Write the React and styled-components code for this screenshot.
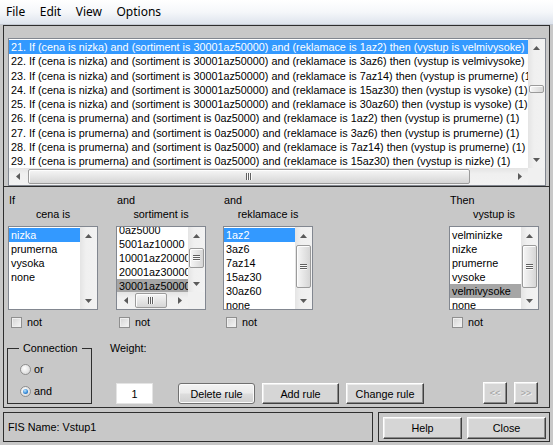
import styled, { createGlobalStyle } from "styled-components";

const PANEL = "#c8c8c8";
const EDGE = "#2e2e2e";

const GlobalStyle = createGlobalStyle`
  * { box-sizing: border-box; }
  html, body {
    margin: 0;
    padding: 0;
    background: ${PANEL};
  }
  body {
    font-family: "Liberation Sans", Arial, sans-serif;
    font-size: 10.8px;
    color: #000;
  }
`;

const Window = styled.div`
  width: 553px;
  height: 445px;
  overflow: hidden;
  background: ${PANEL};
  display: flex;
  flex-direction: column;
`;

const MenuBar = styled.div`
  height: 25px;
  flex: 0 0 25px;
  display: flex;
  align-items: center;
  gap: 14.5px;
  padding: 0 0 2px 6px;
  background: linear-gradient(#ffffff, #f5f7fa 50%, #dee4ed);
  border-bottom: 1px solid #c5cad3;
  font-family: "Noto Sans", "Open Sans", sans-serif;
  font-size: 12px;
`;

const MenuItem = styled.span`
  white-space: nowrap;
`;

const Body = styled.div`
  display: flex;
  flex-direction: column;
  padding: 0 3px;
`;

const Frame = styled.div`
  border: 1px solid ${EDGE};
`;

const RulesFrame = styled(Frame)`
  height: 162px;
  padding: 12px 3px 0 4px;
`;

const EditFrame = styled(Frame)`
  height: 221px;
  border-top: 0;
  padding: 6px 0 3px 3px;
  display: flex;
  flex-direction: column;
`;

/* ---------- list boxes ---------- */

const ListBox = styled.div`
  width: ${(p) => p.$w}px;
  height: ${(p) => p.$h}px;
  margin-top: ${(p) => p.$mt || 0}px;
  border: 1px solid #828790;
  background: #fff;
  display: grid;
  grid-template-columns: minmax(0, 1fr) 17px;
  grid-template-rows: ${(p) => (p.$hscroll ? "minmax(0, 1fr) 17px" : "minmax(0, 1fr)")};
  overflow: hidden;
`;

const Rows = styled.div`
  overflow: hidden;
`;

const RowStack = styled.div`
  margin-top: ${(p) => p.$offset}px;
`;

const Row = styled.div`
  height: ${(p) => p.$h}px;
  line-height: ${(p) => p.$h}px;
  padding-left: 2px;
  white-space: nowrap;
  overflow: hidden;
  background: ${(p) =>
    p.$sel === "active" ? "#3399ff" : p.$sel === "inactive" ? "#a6a6a6" : "transparent"};
  color: ${(p) => (p.$sel === "active" ? "#fff" : "#000")};
`;

const VBar = styled.div`
  display: flex;
  flex-direction: column;
  background: linear-gradient(90deg, #e4e4e4, #f0f0f0 35%, #f2f2f2);
`;

const HBar = styled.div`
  display: flex;
  background: linear-gradient(#e4e4e4, #f0f0f0 35%, #f2f2f2);
`;

const Corner = styled.div`
  background: #f0f0f0;
`;

const ArrowBox = styled.div`
  flex: 0 0 17px;
  width: 17px;
  height: 17px;
  display: flex;
  align-items: center;
  justify-content: center;
`;

const Lane = styled.div`
  flex: 1;
  display: flex;
  flex-direction: ${(p) => (p.$vertical ? "column" : "row")};
`;

const VThumb = styled.div`
  margin: ${(p) => p.$start}px 1px 0 1px;
  height: ${(p) => p.$size}px;
  border: 1px solid #9b9b9b;
  border-radius: 2px;
  background: linear-gradient(90deg, #f6f6f6, #e6e6e6 50%, #d6d6d6);
  box-shadow: inset 1px 1px 0 #fdfdfd;
  display: flex;
  align-items: center;
  justify-content: center;
`;

const HThumb = styled.div`
  margin: 1px 0 1px ${(p) => p.$start}px;
  width: ${(p) => p.$size}px;
  border: 1px solid #9b9b9b;
  border-radius: 2px;
  background: linear-gradient(#f6f6f6, #e6e6e6 50%, #d6d6d6);
  box-shadow: inset 1px 1px 0 #fdfdfd;
  display: flex;
  align-items: center;
  justify-content: center;
`;

function Tri({ dir }) {
  const flat = dir === "up" || dir === "down";
  const w = flat ? 7 : 4;
  const h = flat ? 4 : 7;
  const pts = {
    up: "0,4 3.5,0 7,4",
    down: "0,0 7,0 3.5,4",
    left: "4,0 4,7 0,3.5",
    right: "0,0 0,7 4,3.5",
  }[dir];
  return (
    <svg width={w} height={h} viewBox={`0 0 ${w} ${h}`}>
      <polygon points={pts} fill="#5a5a5a" />
    </svg>
  );
}

function Grip({ vertical }) {
  return vertical ? (
    <svg width="7" height="6" viewBox="0 0 7 6">
      <path d="M0 0.5H7M0 2.5H7M0 4.5H7" stroke="#606060" strokeWidth="1" />
      <path d="M0 1.5H7M0 3.5H7M0 5.5H7" stroke="#fafafa" strokeWidth="1" />
    </svg>
  ) : (
    <svg width="6" height="7" viewBox="0 0 6 7">
      <path d="M0.5 0V7M2.5 0V7M4.5 0V7" stroke="#606060" strokeWidth="1" />
      <path d="M1.5 0V7M3.5 0V7M5.5 0V7" stroke="#fafafa" strokeWidth="1" />
    </svg>
  );
}

function VScroll({ start, size, grip }) {
  return (
    <VBar>
      <ArrowBox>
        <Tri dir="up" />
      </ArrowBox>
      <Lane $vertical>
        {size ? (
          <VThumb $start={start} $size={size}>
            {grip && <Grip vertical />}
          </VThumb>
        ) : null}
      </Lane>
      <ArrowBox>
        <Tri dir="down" />
      </ArrowBox>
    </VBar>
  );
}

function HScroll({ start, size }) {
  return (
    <HBar>
      <ArrowBox>
        <Tri dir="left" />
      </ArrowBox>
      <Lane>
        <HThumb $start={start} $size={size}>
          <Grip />
        </HThumb>
      </Lane>
      <ArrowBox>
        <Tri dir="right" />
      </ArrowBox>
    </HBar>
  );
}

function List({ w, h, mt, items, selected, selKind, rowH, offset, vthumb, hthumb }) {
  return (
    <ListBox $w={w} $h={h} $mt={mt} $hscroll={!!hthumb}>
      <Rows>
        <RowStack $offset={offset}>
          {items.map((it, i) => (
            <Row key={i} $h={rowH} $sel={i === selected ? selKind : null}>
              {it}
            </Row>
          ))}
        </RowStack>
      </Rows>
      <VScroll {...vthumb} />
      {hthumb && <HScroll {...hthumb} />}
      {hthumb && <Corner />}
    </ListBox>
  );
}

/* ---------- rule editing area ---------- */

const Columns = styled.div`
  display: flex;
  padding-left: 1px;
`;

const Column = styled.div`
  width: 90px;
  margin-left: ${(p) => p.$gap}px;
  display: flex;
  flex-direction: column;
`;

const Caption = styled.div`
  height: 14px;
  line-height: 14px;
  padding-left: 1px;
  white-space: nowrap;
`;

const SubCaption = styled(Caption)`
  padding-left: 0;
  text-align: center;
`;

const NotRow = styled.label`
  margin-top: 7px;
  height: 11px;
  display: flex;
  align-items: center;
  gap: 5px;
  padding-left: 3px;
  line-height: 11px;
`;

const CheckBox = styled.span`
  width: 11px;
  height: 11px;
  border: 1px solid #8f8f8f;
  background: linear-gradient(135deg, #d4d4d4, #f6f6f6);
  box-shadow: inset 0 0 0 1px #efefef;
`;

const BottomRow = styled.div`
  margin-top: 13px;
  height: 63px;
  display: flex;
  align-items: flex-end;
`;

const Group = styled.fieldset`
  margin: 0;
  width: 85px;
  height: 63px;
  min-width: 0;
  padding: 7px 0 0 11px;
  border: 1px solid ${EDGE};
  display: flex;
  flex-direction: column;
  gap: 8px;
`;

const GroupTitle = styled.legend`
  padding: 0 4px;
  line-height: 14px;
`;

const RadioRow = styled.label`
  height: 14px;
  display: flex;
  align-items: center;
  gap: 3px;
  padding-left: 1px;
`;

const Radio = styled.span`
  width: 11px;
  height: 11px;
  border-radius: 50%;
  border: 1px solid #8e8e8e;
  background: radial-gradient(circle at 40% 35%, #ffffff, #d9d9d9 80%);
  display: flex;
  align-items: center;
  justify-content: center;

  &::after {
    content: "";
    width: 5px;
    height: 5px;
    border-radius: 50%;
    display: ${(p) => (p.$on ? "block" : "none")};
    background: radial-gradient(circle at 40% 35%, #bfe6ff, #2f86d6 60%, #1b4e8c);
  }
`;

const WeightBlock = styled.div`
  margin-left: 18px;
  height: 63px;
  display: flex;
  flex-direction: column;
  justify-content: space-between;
`;

const WeightLabel = styled.div`
  line-height: 14px;
`;

const WeightInput = styled.input`
  margin-left: 6px;
  width: 37px;
  height: 21px;
  border: 1px solid #e4e4e4;
  background: #fff;
  font: inherit;
  text-align: center;
  padding: 0;
  outline: none;
`;

const ButtonGroup = styled.div`
  display: flex;
  gap: ${(p) => p.$gap}px;
  margin-left: ${(p) => p.$ml};
  margin-right: ${(p) => p.$mr || 0}px;
`;

const Button = styled.button`
  width: ${(p) => p.$w}px;
  height: ${(p) => p.$h}px;
  padding: 0;
  font: inherit;
  color: ${(p) => (p.disabled ? "#a0a0a0" : "#000")};
  text-shadow: ${(p) => (p.disabled ? "1px 1px 0 #f4f4f4" : "none")};
  background: #d6d6d6;
  border: 1px solid;
  border-color: #ffffff #404040 #404040 #ffffff;
  box-shadow: inset -1px -1px 0 #8a8a8a, inset 1px 1px 0 #ececec;
`;

const ThemedButton = styled(Button)`
  border: 1px solid #707070;
  border-radius: 3px;
  background: linear-gradient(#f3f3f3, #ebebeb 48%, #dddddd 52%, #cfcfcf);
  box-shadow: inset 0 0 0 1px #fbfbfb;
`;

const NavButton = styled(Button)`
  font-size: 9px;
`;

/* ---------- status line ---------- */

const StatusRow = styled.div`
  margin-top: 4px;
  height: 30px;
  display: flex;
  gap: 5px;
`;

const StatusBox = styled(Frame)`
  width: 370px;
  display: flex;
  align-items: center;
  padding-left: 4px;
`;

const ActionBox = styled(Frame)`
  flex: 1;
  display: flex;
  gap: 5px;
  padding: 4px 0 0 4px;
`;

const rules = [
  "21. If (cena is nizka) and (sortiment is 30001az50000) and (reklamace is 1az2) then (vystup is velmivysoke) (1)",
  "22. If (cena is nizka) and (sortiment is 30001az50000) and (reklamace is 3az6) then (vystup is velmivysoke) (1)",
  "23. If (cena is nizka) and (sortiment is 30001az50000) and (reklamace is 7az14) then (vystup is prumerne) (1)",
  "24. If (cena is nizka) and (sortiment is 30001az50000) and (reklamace is 15az30) then (vystup is vysoke) (1)",
  "25. If (cena is nizka) and (sortiment is 30001az50000) and (reklamace is 30az60) then (vystup is vysoke) (1)",
  "26. If (cena is prumerna) and (sortiment is 0az5000) and (reklamace is 1az2) then (vystup is prumerne) (1)",
  "27. If (cena is prumerna) and (sortiment is 0az5000) and (reklamace is 3az6) then (vystup is prumerne) (1)",
  "28. If (cena is prumerna) and (sortiment is 0az5000) and (reklamace is 7az14) then (vystup is prumerne) (1)",
  "29. If (cena is prumerna) and (sortiment is 0az5000) and (reklamace is 15az30) then (vystup is nizke) (1)",
];

const variables = [
  {
    gap: 0,
    lead: "If",
    name: "cena is",
    items: ["nizka", "prumerna", "vysoka", "none"],
    selected: 0,
    selKind: "active",
    offset: 1,
    vthumb: {},
  },
  {
    gap: 18,
    lead: "and",
    name: "sortiment is",
    items: ["0az5000", "5001az10000", "10001az20000", "20001az30000", "30001az50000", "none"],
    selected: 4,
    selKind: "inactive",
    offset: -4,
    vthumb: { start: 4, size: 20, grip: true },
    hthumb: { start: 1, size: 32 },
  },
  {
    gap: 17,
    lead: "and",
    name: "reklamace is",
    items: ["1az2", "3az6", "7az14", "15az30", "30az60", "none"],
    selected: 0,
    selKind: "active",
    offset: 1,
    vthumb: { start: 1, size: 43, grip: true },
  },
  {
    gap: 136,
    lead: "Then",
    name: "vystup is",
    items: ["velminizke", "nizke", "prumerne", "vysoke", "velmivysoke", "none"],
    selected: 4,
    selKind: "inactive",
    offset: 1,
    vthumb: { start: 1, size: 43, grip: true },
  },
];

export default function App() {
  return (
    <Window>
      <GlobalStyle />
      <MenuBar>
        <MenuItem>File</MenuItem>
        <MenuItem>Edit</MenuItem>
        <MenuItem>View</MenuItem>
        <MenuItem>Options</MenuItem>
      </MenuBar>
      <Body>
        <RulesFrame>
          <List
            w={538}
            h={148}
            items={rules}
            selected={0}
            selKind="active"
            rowH={14.25}
            offset={1}
            vthumb={{ start: 29, size: 8 }}
            hthumb={{ start: 2, size: 442 }}
          />
        </RulesFrame>
        <EditFrame>
          <Columns>
            {variables.map((v) => (
              <Column key={v.name} $gap={v.gap}>
                <Caption>{v.lead}</Caption>
                <SubCaption>{v.name}</SubCaption>
                <List
                  w={90}
                  h={84}
                  mt={5}
                  items={v.items}
                  selected={v.selected}
                  selKind={v.selKind}
                  rowH={14}
                  offset={v.offset}
                  vthumb={v.vthumb}
                  hthumb={v.hthumb}
                />
                <NotRow>
                  <CheckBox />
                  not
                </NotRow>
              </Column>
            ))}
          </Columns>
          <BottomRow>
            <Group>
              <GroupTitle>Connection</GroupTitle>
              <RadioRow>
                <Radio />
                or
              </RadioRow>
              <RadioRow>
                <Radio $on />
                and
              </RadioRow>
            </Group>
            <WeightBlock>
              <WeightLabel>Weight:</WeightLabel>
              <WeightInput value="1" readOnly />
            </WeightBlock>
            <ButtonGroup $gap={7} $ml="25px">
              <ThemedButton $w={77} $h={21}>Delete rule</ThemedButton>
              <Button $w={77} $h={21}>Add rule</Button>
              <Button $w={78} $h={21}>Change rule</Button>
            </ButtonGroup>
            <ButtonGroup $gap={7} $ml="auto" $mr={11}>
              <NavButton $w={24} $h={22} disabled>&lt;&lt;</NavButton>
              <NavButton $w={24} $h={22} disabled>&gt;&gt;</NavButton>
            </ButtonGroup>
          </BottomRow>
        </EditFrame>
        <StatusRow>
          <StatusBox>FIS Name: Vstup1</StatusBox>
          <ActionBox>
            <Button $w={79} $h={22}>Help</Button>
            <Button $w={79} $h={22}>Close</Button>
          </ActionBox>
        </StatusRow>
      </Body>
    </Window>
  );
}
